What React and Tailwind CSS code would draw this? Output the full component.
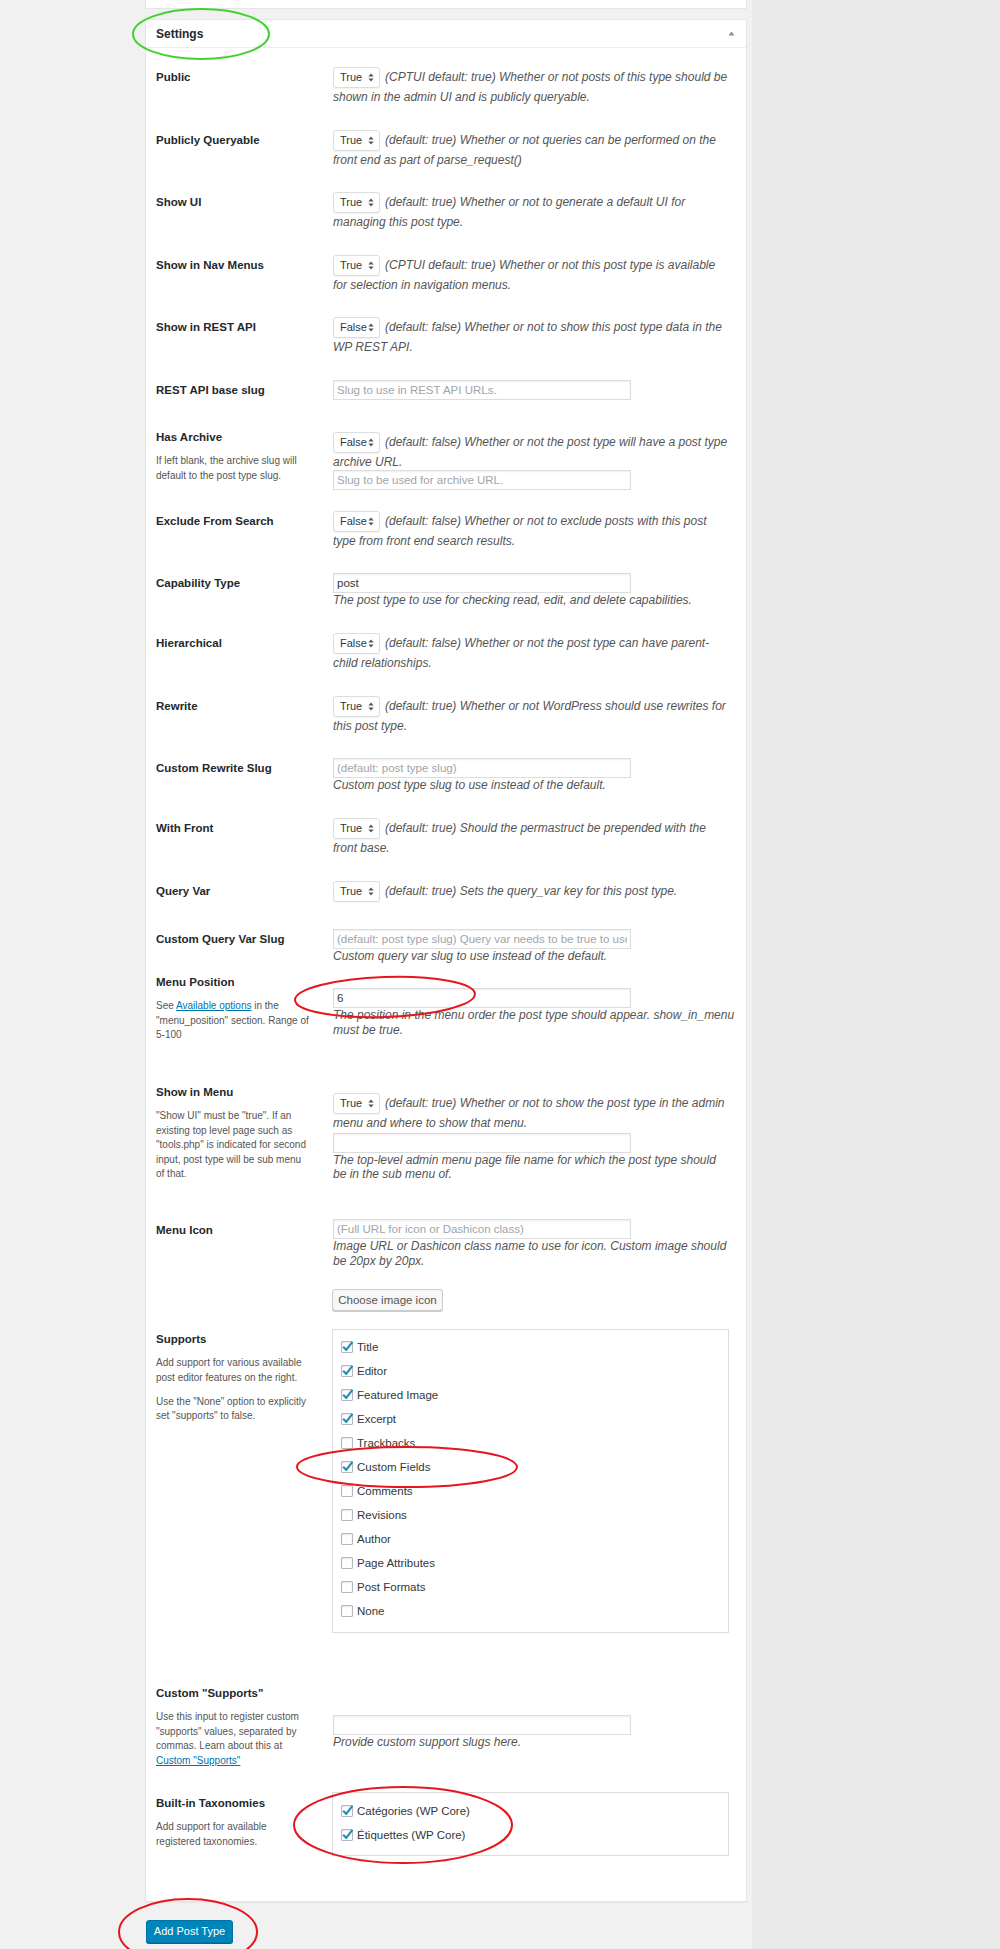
import React from "react";

const font = "font-['Liberation_Sans',Arial,sans-serif]";

function Arrows() {
  return (
    <svg width="6" height="9" viewBox="0 0 6 9" className="shrink-0">
      <path d="M3 0.5 L5.6 3.6 L0.4 3.6 Z" fill="#555" />
      <path d="M3 8.5 L5.6 5.4 L0.4 5.4 Z" fill="#555" />
    </svg>
  );
}

function Select({ value }) {
  return (
    <span className="inline-flex align-middle items-center justify-between h-[21px] w-[47px] my-[2px] mr-[5px] pl-[6px] pr-[5px] border border-[#ddd] rounded-[3px] bg-white not-italic text-[11px] text-[#32373c] shadow-[0_1px_1px_rgba(0,0,0,0.05)]">
      {value}
      <Arrows />
    </span>
  );
}

function TextInput({ placeholder, value, extra = "" }) {
  return (
    <input
      type="text"
      readOnly
      placeholder={placeholder}
      defaultValue={value}
      className={`block w-[298px] h-[20px] border border-[#ddd] bg-white px-[3px] not-italic text-[11.5px] text-[#32373c] placeholder:text-[#a0a5aa] shadow-[inset_0_1px_2px_rgba(0,0,0,0.07)] outline-none ${font} ${extra}`}
    />
  );
}

function Lines({ lines }) {
  return lines.map((l, i) => (
    <React.Fragment key={i}>
      {i > 0 && <br />}
      {l}
    </React.Fragment>
  ));
}

function Checkbox({ checked, label }) {
  return (
    <div className="flex items-center h-[24px] gap-[4px]">
      <span className="relative w-[12px] h-[12px] border border-[#b4b9be] rounded-[1px] bg-white shadow-[inset_0_1px_2px_rgba(0,0,0,0.1)]">
        {checked && (
          <svg width="13" height="13" viewBox="0 0 12 12" className="absolute left-[-1px] top-[-2px]">
            <path d="M2 6.3 L4.8 9.2 L10.6 1.8" fill="none" stroke="#1e8cbe" strokeWidth="2" />
          </svg>
        )}
      </span>
      <span className="text-[11.5px] leading-[16px] text-[#32373c]">{label}</span>
    </div>
  );
}

const Link = ({ children }) => (
  <a href="#" className="text-[#0073aa] underline">
    {children}
  </a>
);

function SelectDesc({ value, lines }) {
  return (
    <div>
      <Select value={value} />
      <Lines lines={lines} />
    </div>
  );
}

function InputDesc({ placeholder, value, lines }) {
  return (
    <div className="pt-[2px]">
      <TextInput placeholder={placeholder} value={value} />
      {lines && (
        <div>
          <Lines lines={lines} />
        </div>
      )}
    </div>
  );
}

const supports = [
  ["Title", true],
  ["Editor", true],
  ["Featured Image", true],
  ["Excerpt", true],
  ["Trackbacks", false],
  ["Custom Fields", true],
  ["Comments", false],
  ["Revisions", false],
  ["Author", false],
  ["Page Attributes", false],
  ["Post Formats", false],
  ["None", false],
];

const rows = [
  {
    label: "Public",
    h: "h-[63px]",
    body: (
      <SelectDesc
        value="True"
        lines={[
          "(CPTUI default: true) Whether or not posts of this type should be",
          "shown in the admin UI and is publicly queryable.",
        ]}
      />
    ),
  },
  {
    label: "Publicly Queryable",
    h: "h-[62px]",
    body: (
      <SelectDesc
        value="True"
        lines={[
          "(default: true) Whether or not queries can be performed on the",
          "front end as part of parse_request()",
        ]}
      />
    ),
  },
  {
    label: "Show UI",
    h: "h-[63px]",
    body: (
      <SelectDesc
        value="True"
        lines={[
          "(default: true) Whether or not to generate a default UI for",
          "managing this post type.",
        ]}
      />
    ),
  },
  {
    label: "Show in Nav Menus",
    h: "h-[62px]",
    body: (
      <SelectDesc
        value="True"
        lines={[
          "(CPTUI default: true) Whether or not this post type is available",
          "for selection in navigation menus.",
        ]}
      />
    ),
  },
  {
    label: "Show in REST API",
    h: "h-[63px]",
    body: (
      <SelectDesc
        value="False"
        lines={[
          "(default: false) Whether or not to show this post type data in the",
          "WP REST API.",
        ]}
      />
    ),
  },
  {
    label: "REST API base slug",
    h: "h-[47px]",
    body: <InputDesc placeholder="Slug to use in REST API URLs." />,
  },
  {
    label: "Has Archive",
    h: "h-[84px]",
    help: [["If left blank, the archive slug will", "default to the post type slug."]],
    body: (
      <div className="pt-[5px]">
        <Select value="False" />
        (default: false) Whether or not the post type will have a post type
        <br />
        archive URL.
        <TextInput placeholder="Slug to be used for archive URL." />
      </div>
    ),
  },
  {
    label: "Exclude From Search",
    h: "h-[62px]",
    body: (
      <SelectDesc
        value="False"
        lines={[
          "(default: false) Whether or not to exclude posts with this post",
          "type from front end search results.",
        ]}
      />
    ),
  },
  {
    label: "Capability Type",
    h: "h-[60px]",
    body: (
      <InputDesc
        value="post"
        lines={["The post type to use for checking read, edit, and delete capabilities."]}
      />
    ),
  },
  {
    label: "Hierarchical",
    h: "h-[63px]",
    body: (
      <SelectDesc
        value="False"
        lines={[
          "(default: false) Whether or not the post type can have parent-",
          "child relationships.",
        ]}
      />
    ),
  },
  {
    label: "Rewrite",
    h: "h-[62px]",
    body: (
      <SelectDesc
        value="True"
        lines={[
          "(default: true) Whether or not WordPress should use rewrites for",
          "this post type.",
        ]}
      />
    ),
  },
  {
    label: "Custom Rewrite Slug",
    h: "h-[60px]",
    body: (
      <InputDesc
        placeholder="(default: post type slug)"
        lines={["Custom post type slug to use instead of the default."]}
      />
    ),
  },
  {
    label: "With Front",
    h: "h-[63px]",
    body: (
      <SelectDesc
        value="True"
        lines={[
          "(default: true) Should the permastruct be prepended with the",
          "front base.",
        ]}
      />
    ),
  },
  {
    label: "Query Var",
    h: "h-[48px]",
    body: (
      <SelectDesc
        value="True"
        lines={["(default: true) Sets the query_var key for this post type."]}
      />
    ),
  },
  {
    label: "Custom Query Var Slug",
    h: "h-[43px]",
    body: (
      <InputDesc
        placeholder="(default: post type slug) Query var needs to be true to use."
        lines={["Custom query var slug to use instead of the default."]}
      />
    ),
  },
  {
    label: "Menu Position",
    h: "h-[110px]",
    help: [
      [
        <>
          See <Link>Available options</Link> in the
        </>,
        '"menu_position" section. Range of',
        "5-100",
      ],
    ],
    body: (
      <div className="pt-[18px]">
        <TextInput value="6" />
        <Lines
          lines={[
            "The position in the menu order the post type should appear. show_in_menu",
            "must be true.",
          ]}
        />
      </div>
    ),
  },
  {
    label: "Show in Menu",
    h: "h-[138px]",
    help: [
      [
        '"Show UI" must be "true". If an',
        "existing top level page such as",
        '"tools.php" is indicated for second',
        "input, post type will be sub menu",
        "of that.",
      ],
    ],
    body: (
      <div className="pt-[11px]">
        <Select value="True" />
        (default: true) Whether or not to show the post type in the admin
        <br />
        menu and where to show that menu.
        <TextInput extra="mt-[2px]" />
        <Lines
          lines={[
            "The top-level admin menu page file name for which the post type should",
            "be in the sub menu of.",
          ]}
        />
      </div>
    ),
  },
  {
    label: "Menu Icon",
    h: "h-[109px]",
    body: (
      <div className="pt-[1px]">
        <TextInput placeholder="(Full URL for icon or Dashicon class)" />
        <Lines
          lines={[
            "Image URL or Dashicon class name to use for icon. Custom image should",
            "be 20px by 20px.",
          ]}
        />
        <button
          type="button"
          className="block mt-[21px] -ml-[1px] h-[22px] w-[111px] border border-[#ccc] rounded-[3px] bg-[#f7f7f7] not-italic text-[11.5px] text-[#555] shadow-[0_1px_0_#ccc]"
        >
          Choose image icon
        </button>
      </div>
    ),
  },
  {
    label: "Supports",
    h: "h-[354px]",
    help: [
      ["Add support for various available", "post editor features on the right."],
      ['Use the "None" option to explicitly', 'set "supports" to false.'],
    ],
    body: (
      <div className="pt-[2px] -ml-[1px]">
        <div className="w-[397px] border border-[#ddd] pt-[5px] pb-[9px] pl-[8px] not-italic">
          {supports.map(([l, c]) => (
            <Checkbox key={l} label={l} checked={c} />
          ))}
        </div>
      </div>
    ),
  },
  {
    label: 'Custom "Supports"',
    h: "h-[110px]",
    help: [
      [
        "Use this input to register custom",
        '"supports" values, separated by',
        "commas. Learn about this at",
        <Link>Custom "Supports"</Link>,
      ],
    ],
    body: (
      <div className="pt-[34px]">
        <TextInput extra="h-[19px]" />
        Provide custom support slugs here.
      </div>
    ),
  },
  {
    label: "Built-in Taxonomies",
    h: "h-[110px]",
    help: [["Add support for available", "registered taxonomies."]],
    body: (
      <div className="pt-[1px] -ml-[1px]">
        <div className="w-[397px] border border-[#ddd] pt-[6px] pb-[8px] pl-[8px] not-italic">
          <Checkbox label="Catégories (WP Core)" checked />
          <Checkbox label="Étiquettes (WP Core)" checked />
        </div>
      </div>
    ),
  },
];

function Row({ row }) {
  return (
    <div className={`flex ${row.h}`}>
      <div className="w-[177px] shrink-0 pt-[4px]">
        <div className="text-[11.5px] font-bold leading-[16px] text-[#23282d]">{row.label}</div>
        {row.help &&
          row.help.map((p, i) => (
            <p
              key={i}
              className={`w-[165px] text-[10px] leading-[14.5px] text-[#555] ${i === 0 ? "mt-[9px]" : "mt-[9.5px]"}`}
            >
              <Lines lines={p} />
            </p>
          ))}
      </div>
      <div className="w-[410px] text-[12px] italic leading-[14.5px] text-[#555]">{row.body}</div>
    </div>
  );
}

function Annotations() {
  return (
    <svg
      className="absolute left-0 top-0 pointer-events-none"
      width="1000"
      height="1949"
      viewBox="0 0 1000 1949"
    >
      <ellipse cx="201" cy="34" rx="68" ry="25" fill="none" stroke="#3fd42c" strokeWidth="2" />
      <ellipse cx="385" cy="997" rx="90" ry="20" fill="none" stroke="#e5171d" strokeWidth="2" transform="rotate(-2 385 997)" />
      <ellipse cx="407" cy="1467" rx="110" ry="20" fill="none" stroke="#e5171d" strokeWidth="2" />
      <ellipse cx="403" cy="1825" rx="109" ry="38" fill="none" stroke="#e5171d" strokeWidth="2" />
      <ellipse cx="188" cy="1932" rx="69" ry="33" fill="none" stroke="#e5171d" strokeWidth="2" />
    </svg>
  );
}

export default function App() {
  return (
    <div className={`relative min-h-[1949px] bg-[#e9e9e9] overflow-hidden ${font}`}>
      <div className="w-[752px] min-h-[1949px] bg-[#f1f1f1]">
        <div className="ml-[145px] w-[602px] h-[9px] bg-white border border-t-0 border-[#e5e5e5]" />

        <div className="ml-[145px] mt-[10px] w-[602px] bg-white border border-[#e5e5e5] shadow-[0_1px_1px_rgba(0,0,0,0.04)]">
          <div className="flex items-center justify-between h-[28px] pl-[10px] pr-[11px] border-b border-[#eee]">
            <span className="text-[12px] font-semibold text-[#23282d]">Settings</span>
            <svg width="7" height="5" viewBox="0 0 7 5">
              <path d="M3.5 0.5 L6.5 4.5 L0.5 4.5 Z" fill="#8c8f94" />
            </svg>
          </div>
          <div className="pt-[17px] pl-[10px]">
            {rows.map((r) => (
              <Row key={r.label} row={r} />
            ))}
          </div>
        </div>

        <button
          type="button"
          className="block ml-[146px] mt-[18px] h-[23px] w-[87px] rounded-[3px] border border-[#0073aa] bg-[#0085ba] text-[11px] text-white shadow-[0_1px_0_#006799]"
        >
          Add Post Type
        </button>
      </div>
      <Annotations />
    </div>
  );
}
